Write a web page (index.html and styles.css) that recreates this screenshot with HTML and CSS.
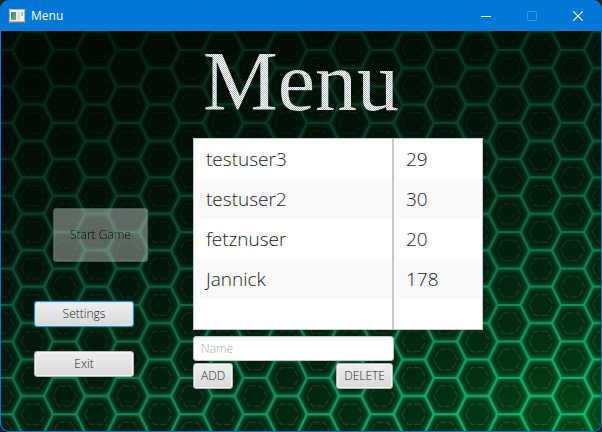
FILE: index.html
```html
<!DOCTYPE html>
<html lang="en">
<head>
<meta charset="utf-8">
<title>Menu</title>
<link rel="stylesheet" href="styles.css">
</head>
<body>
<div class="window">
  <header class="titlebar">
    <svg class="app-icon" width="16" height="14" viewBox="0 0 16 14" aria-hidden="true">
      <defs><linearGradient id="pane" x1="0" y1="0" x2="0.6" y2="1"><stop offset="0" stop-color="#4b78a8"/><stop offset="1" stop-color="#58ad78"/></linearGradient></defs>
      <rect x="0.5" y="0.5" width="15" height="12" fill="#f3f3f3" stroke="#b9b4ae"/>
      <path d="M0 13.5H16" stroke="#82796f"/>
      <rect x="2" y="3" width="5" height="8" fill="url(#pane)"/>
      <rect x="8" y="3" width="3" height="8" fill="#dedede"/>
      <rect x="12" y="3" width="2" height="4" fill="#9fc7ae"/>
    </svg>
    <span class="caption">Menu</span>
    <div class="window-controls">
      <button type="button" aria-label="Minimize"><svg width="10" height="10" viewBox="0 0 10 10"><path d="M0 5.5H10" stroke="#fff"/></svg></button>
      <button type="button" aria-label="Maximize" disabled><svg width="10" height="10" viewBox="0 0 10 10"><rect x="0.5" y="0.5" width="9" height="9" rx="0.5" fill="none" stroke="#3696e3"/></svg></button>
      <button type="button" aria-label="Close"><svg width="10" height="10" viewBox="0 0 10 10"><path d="M0.3 0.3L9.7 9.7M9.7 0.3L0.3 9.7" stroke="#fff" stroke-width="1.1"/></svg></button>
    </div>
  </header>
  <main class="scene">
    <svg class="backdrop" width="100%" height="100%" aria-hidden="true">
      <defs>
        <linearGradient id="base" x1="0.25" y1="0" x2="0.75" y2="1">
          <stop offset="0" stop-color="#020904"/><stop offset="0.45" stop-color="#02140a"/><stop offset="1" stop-color="#022a10"/>
        </linearGradient>
        <radialGradient id="corner" cx="1" cy="1" r="0.6">
          <stop offset="0" stop-color="#005c14" stop-opacity="0.6"/><stop offset="0.5" stop-color="#004c18" stop-opacity="0.15"/><stop offset="1" stop-color="#004015" stop-opacity="0"/>
        </radialGradient>
        <linearGradient id="fade" x1="0.3" y1="0" x2="0.7" y2="1">
          <stop offset="0" stop-color="#fff" stop-opacity="0.15"/><stop offset="0.3" stop-color="#fff" stop-opacity="0.28"/><stop offset="0.65" stop-color="#fff" stop-opacity="0.55"/><stop offset="1" stop-color="#fff" stop-opacity="0.95"/>
        </linearGradient>
        <mask id="light"><rect width="100%" height="100%" fill="url(#fade)"/></mask>
        <filter id="glow" x="0" y="0" width="100%" height="100%"><feGaussianBlur stdDeviation="2.4"/></filter>
        <pattern id="cells" width="63.5" height="36.43" patternUnits="userSpaceOnUse" patternTransform="translate(52 19)">
          <path d="M0 0H23L32 18.2H54.5L63.5 0M0 36.43H23L32 18.2M54.5 18.2L63.5 36.43" fill="none" stroke="#20d38c" stroke-width="2.2"/>
        </pattern>
        <pattern id="inner" width="63.5" height="36.43" patternUnits="userSpaceOnUse" patternTransform="translate(52 19)">
          <g fill="none" stroke="#35684a" stroke-width="1.2" stroke-dasharray="7 2">
            <path d="M5.5 8L17.5 8L23.5 18.2L17.5 28.4H5.5L-0.5 18.2ZM63 18.2L69 8"/>
            <path d="M31.5 0L37.5 10.2H49.5L55.5 0M31.5 36.4L37.5 26.2H49.5L55.5 36.4"/>
          </g>
        </pattern>
      </defs>
      <rect width="100%" height="100%" fill="url(#base)"/>
      <rect width="100%" height="100%" fill="url(#corner)"/>
      <g mask="url(#light)">
        <g filter="url(#glow)"><rect width="100%" height="100%" fill="url(#cells)"/></g>
        <rect width="100%" height="100%" fill="url(#inner)" opacity="0.6"/>
        <rect width="100%" height="100%" fill="url(#cells)" opacity="0.75"/>
      </g>
    </svg>
    <nav class="actions">
      <button type="button" class="btn start" disabled>Start Game</button>
      <button type="button" class="btn focused">Settings</button>
      <button type="button" class="btn">Exit</button>
    </nav>
    <section class="board">
      <h1>Menu</h1>
      <table class="scores">
        <tbody>
          <tr><td>testuser3</td><td>29</td></tr>
          <tr><td>testuser2</td><td>30</td></tr>
          <tr><td>fetznuser</td><td>20</td></tr>
          <tr><td>Jannick</td><td>178</td></tr>
          <tr class="blank"><td></td><td></td></tr>
        </tbody>
      </table>
      <form class="user-form">
        <input type="text" placeholder="Name" aria-label="Name">
        <div class="form-buttons">
          <button type="button" class="btn">ADD</button>
          <button type="button" class="btn">DELETE</button>
        </div>
      </form>
    </section>
  </main>
</div>
</body>
</html>
```
FILE: styles.css
```css
* { box-sizing: border-box; }

body {
  margin: 0;
  background: #20252b;
  color: #222;
  font: 350 12px/16px "Open Sans", "Noto Sans", sans-serif;
}

button, input { font: inherit; }

.window {
  display: flex;
  flex-direction: column;
  min-height: 100vh;
  overflow: hidden;
  border: 1px solid #0078d7;
  border-top: 0;
  border-radius: 9px;
  background: #0078d7;
}

.titlebar {
  display: flex;
  align-items: center;
  height: 31px;
  padding-left: 8px;
  color: #fff;
  font-weight: 400;
}

.caption { margin-left: 6px; }

.window-controls {
  display: flex;
  align-self: stretch;
  margin-left: auto;
}

.window-controls button {
  display: grid;
  place-items: center;
  width: 46px;
  padding: 0;
  border: 0;
  background: none;
}

.scene {
  position: relative;
  display: grid;
  grid-template-columns: 192px 1fr;
  flex: 1;
  overflow: hidden;
  border-radius: 0 0 8px 8px;
}

.backdrop {
  position: absolute;
  inset: 0;
}

.actions, .board { position: relative; }

.actions {
  display: flex;
  flex-direction: column;
  align-items: flex-start;
  padding: 177px 0 0 33px;
}

.btn {
  height: 26px;
  padding: 0 7px;
  border: 1px solid #b5b5b5;
  border-radius: 3px;
  background: linear-gradient(#efefef, #d9d9d9);
  box-shadow: inset 0 0 0 1px #f4f4f4;
  color: #222;
}

.actions .btn { width: 100px; margin-bottom: 24px; }

.actions .start {
  width: 95px;
  height: 54px;
  margin: 0 0 39px 19px;
  opacity: 0.4;
  color: #000;
}

.actions .focused {
  border-color: #039ed3;
  box-shadow: 0 0 1px #039ed3, inset 0 0 0 1px #cfe5f2;
}

h1 {
  width: 216px;
  margin: 0;
  padding-top: 6px;
  background: repeating-conic-gradient(#fff 0 25%, #b4bdc2 0 50%) 0 0 / 2px 2px;
  background-clip: text;
  color: transparent;
  font: 84px/90px "Liberation Serif", serif;
  text-align: center;
}

.scores {
  width: 290px;
  margin-top: 11px;
  border: 1px solid #c8c8c8;
  border-spacing: 0;
  background: #fff;
  font-size: 19px;
  line-height: 24px;
}

.scores tr { height: 40px; }
.scores tr:nth-child(even) { background: #f9f9f9; }
.scores .blank { height: 30px; }
.scores td { padding: 0 12px; }
.scores td:first-child {
  width: 200px;
  border-right: 2px solid #c8c8c8;
}

.user-form { width: 201px; margin-top: 6px; }

.user-form input {
  display: block;
  width: 100%;
  height: 25px;
  padding: 0 7px;
  border: 1px solid #c4c4c4;
  border-radius: 3px;
  background: linear-gradient(#f2f2f2, #fff 5px);
}

.user-form input::placeholder { color: #aaa; }

.form-buttons {
  display: flex;
  justify-content: space-between;
  padding: 2px 1px 0 0;
}
```
